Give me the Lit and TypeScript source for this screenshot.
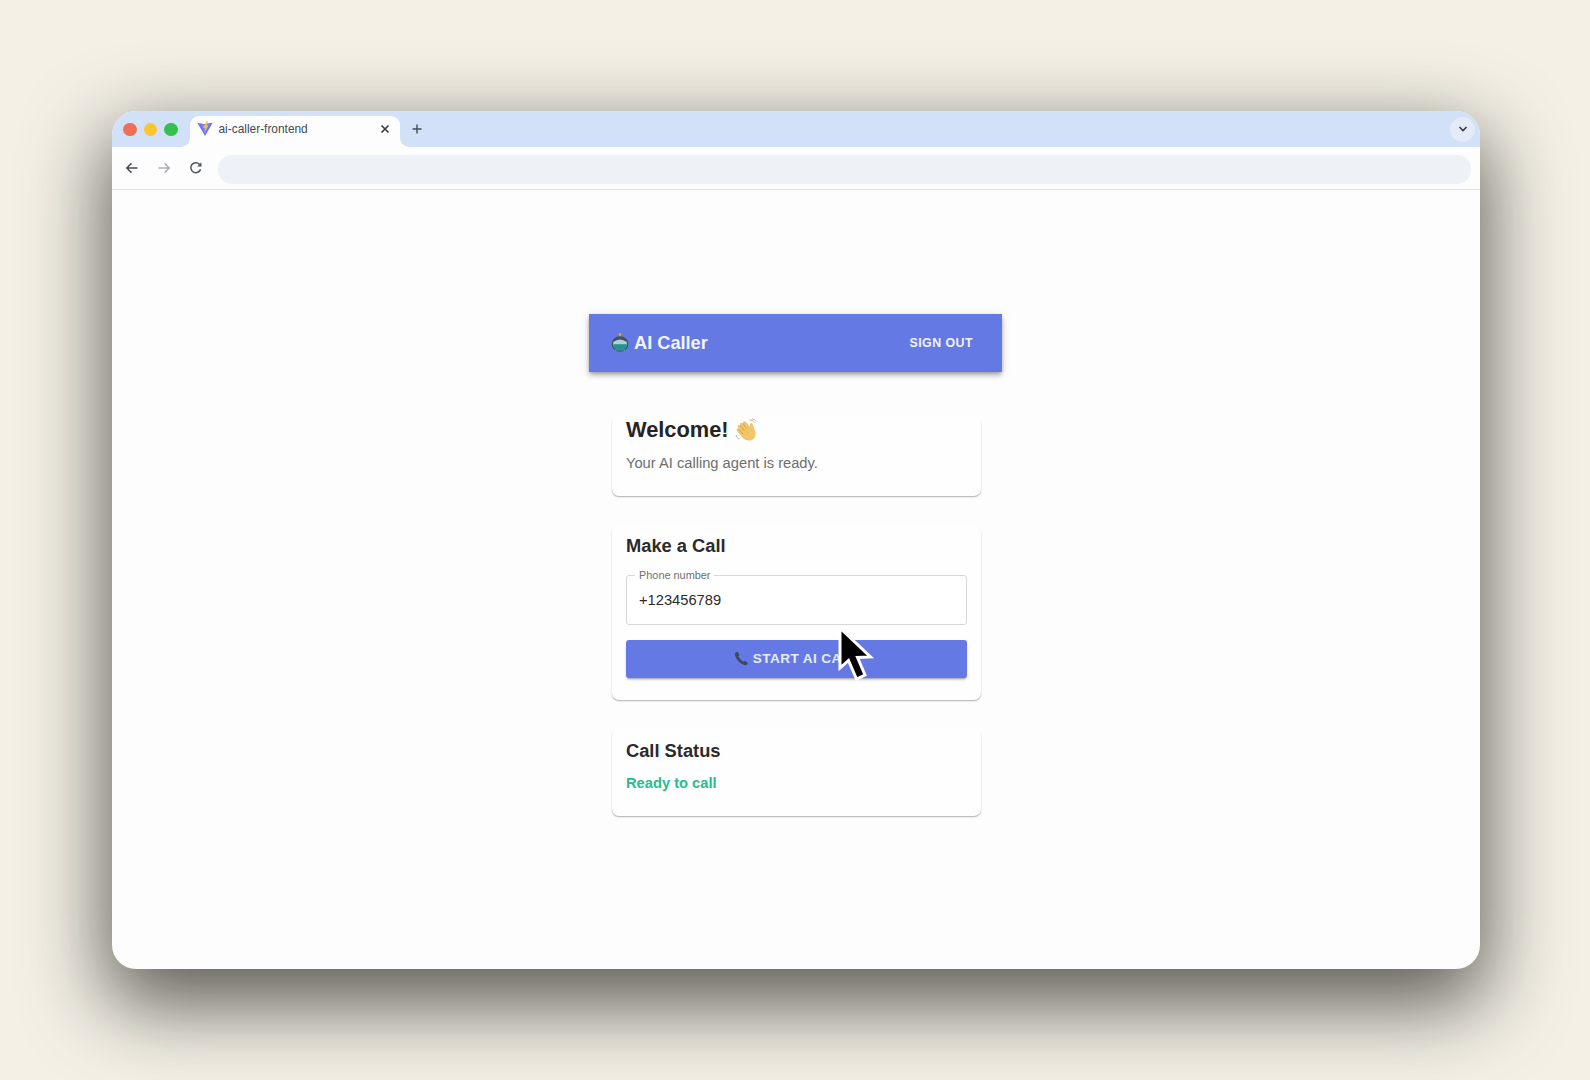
import { LitElement, html, css, svg } from "lit";
import { customElement } from "lit/decorators.js";

const viteIcon = svg`<svg width="16" height="16" viewBox="0 0 16 16"><path d="M0.3 1.8 L7 3 L15.7 1.8 L8 15 Z" fill="#6f73f2"/><path d="M4.8 3.4 L8 13.6 L11.6 3.4 Z" fill="#a08cf2" opacity=".75"/><path d="M9.5 0.2 L6.3 6.8 L8.4 6.8 L7.7 10.8 L11.4 4.6 L9.4 4.6 L11 0.2 Z" fill="#fbc531"/></svg>`;

const robot = svg`<svg width="18" height="20" viewBox="0 0 18 20"><rect x="8.2" y="0.5" width="1.6" height="4" fill="#c98a3c"/><circle cx="9" cy="1.6" r="1.3" fill="#e8a33d"/><ellipse cx="9" cy="11" rx="8.4" ry="7.8" fill="#3e5560"/><path d="M2.2 9 Q9 3.8 15.8 9 L15.8 11 H2.2 Z" fill="#b9ccd2"/><path d="M1.6 11 H16.4 L13.8 17.8 H4.2 Z" fill="#3fb9a5"/><path d="M4 11.5 V17 M6 11.5 V18 M8 11.5 V18 M10 11.5 V18 M12 11.5 V18 M14 11.5 V17" stroke="#1e4f72" stroke-width=".8"/></svg>`;

const wave = svg`<svg width="24" height="24" viewBox="0 0 24 24"><path d="M3 13 C1.6 11.6 3.2 10 4.6 11 L3.9 9.2 C3 7.4 5 6.2 6.2 7.6 L6 6.6 C5.6 4.8 7.6 4 8.8 5.4 L9 4.6 C9 3 11 2.6 12 4 L16 9 L15.9 6.6 C16 4.8 18.3 4.7 18.8 6.4 L21.4 14 C22.6 18.4 19.6 22.6 15 22.6 C11.8 22.6 9.8 21 8 19 Z" fill="#f2c56b"/><path d="M6.2 7.6 L10.6 13 M8.8 5.4 L13 10.6 M4.6 11 L9 16" stroke="#d69f45" stroke-width=".9" fill="none"/><path d="M15.5 2.2 C17.6 1.8 19.4 2.8 20.2 4.6 M18 .9 C19.8 1 21.4 2 22 3.4 M2 17 C2.4 19 3.6 20.4 5.4 21" stroke="#b9a98c" stroke-width=".9" fill="none"/></svg>`;

const phone = svg`<svg width="15" height="15" viewBox="0 0 15 15"><path d="M2.4 1 C1 1.8 .6 3.4 1.4 5.4 C2.8 9 6 12.4 9.6 13.8 C11.2 14.4 12.6 14.2 13.6 13 L14 12.2 L11 9.8 L9.6 10.8 C7.6 9.8 5.2 7.2 4.4 5.2 L5.6 4 L3.4 .8 Z" fill="#3a4b5a"/></svg>`;

const cursor = svg`<svg width="46" height="64" viewBox="0 0 46 64"><path d="M4 3 L4 43 L12.5 35.5 L20.5 54 L29 50 L21.5 32.5 L34.5 32 Z" fill="#000" stroke="#fff" stroke-width="3" stroke-linejoin="miter"/></svg>`;

@customElement("app-root")
export class AppRoot extends LitElement {
  static styles = css`
    :host {
      display: block;
      width: 1590px;
      height: 1080px;
      overflow: hidden;
      background: #f4f0e6;
      font-family: "Liberation Sans", Arial, sans-serif;
      color: #242424;
    }
    .stage {
      box-sizing: border-box;
      height: 100%;
      padding: 111px 110px 111px 112px;
    }
    .window {
      position: relative;
      height: 858px;
      border-radius: 24px;
      background: #fdfdfd;
      box-shadow: 0 30px 80px 6px rgba(20, 20, 15, 0.68);
      overflow: hidden;
      display: flex;
      flex-direction: column;
    }
    .tabstrip {
      height: 36px;
      flex: none;
      background: #d3e1f8;
      display: flex;
      align-items: flex-end;
      padding-left: 11px;
    }
    .lights {
      display: flex;
      gap: 7px;
      align-self: center;
      margin-top: 1px;
    }
    .light {
      width: 13.5px;
      height: 13.5px;
      border-radius: 50%;
    }
    .red { background: #ee6f55; }
    .yellow { background: #fbc72b; }
    .green { background: #35c04e; }
    .tab {
      position: relative;
      box-sizing: border-box;
      width: 210px;
      height: 31px;
      margin-left: 12px;
      padding: 0 10px 5px 7px;
      background: #fdfdfe;
      border-radius: 9px 9px 0 0;
      display: flex;
      align-items: center;
      font-size: 11.9px;
      color: #444a52;
    }
    .tab::before,
    .tab::after {
      content: "";
      position: absolute;
      bottom: 0;
      width: 9px;
      height: 9px;
    }
    .tab::before {
      left: -9px;
      background: radial-gradient(circle at 0 0, transparent 8.5px, #fdfdfe 9px);
    }
    .tab::after {
      right: -9px;
      background: radial-gradient(circle at 100% 0, transparent 8.5px, #fdfdfe 9px);
    }
    .tab-title {
      flex: 1;
      margin-left: 6px;
    }
    .plus {
      margin-left: 11px;
      align-self: center;
      display: flex;
    }
    .spacer { flex: 1; }
    .chevron {
      align-self: center;
      margin-right: 5px;
      width: 25px;
      height: 25px;
      border-radius: 50%;
      background: #e3eaf8;
      display: flex;
      align-items: center;
      justify-content: center;
    }
    .toolbar {
      height: 43px;
      flex: none;
      box-sizing: border-box;
      background: #fdfdfe;
      border-bottom: 1px solid #e3e3e5;
      display: flex;
      align-items: center;
      padding: 0 9px 0 13px;
    }
    .nav {
      width: 32px;
      display: flex;
    }
    .nav.reload { width: 22px; }
    .address {
      flex: 1;
      height: 29px;
      border-radius: 14px;
      background: #eef2f7;
      margin: 2px 0 0 7px;
    }
    .page {
      flex: 1;
      display: flex;
      flex-direction: column;
      align-items: center;
      padding-top: 124px;
      padding-right: 1px;
    }
    .app {
      width: 413px;
      display: flex;
      flex-direction: column;
      align-items: center;
    }
    .appbar {
      align-self: stretch;
      box-sizing: border-box;
      height: 58px;
      background: #6479e4;
      box-shadow: 0 2px 4px -1px rgba(0,0,0,.3), 0 4px 5px rgba(0,0,0,.14), 0 1px 10px rgba(0,0,0,.1);
      color: #f2f4fd;
      display: flex;
      align-items: center;
      justify-content: space-between;
      padding: 0 29px 0 22px;
    }
    .brand {
      display: flex;
      align-items: center;
      gap: 5px;
      font-size: 18.2px;
      font-weight: 700;
    }
    .signout {
      font-size: 12.4px;
      font-weight: 700;
      letter-spacing: 0.45px;
    }
    .cards {
      width: 369px;
      display: flex;
      flex-direction: column;
      gap: 29px;
      margin: 44px 0 0 2px;
    }
    .card {
      box-sizing: border-box;
      padding: 0 14px;
      background: #fefefe;
      border-radius: 7px;
      box-shadow: 0 1.5px 1.5px -0.5px rgba(0,0,0,.3), 0 0 1px rgba(0,0,0,.012);
    }
    .welcome { height: 80px; padding-top: 0; }
    .make { height: 175px; padding-top: 9px; }
    .status { height: 87px; padding-top: 10px; }
    h1 {
      margin: 0;
      display: flex;
      align-items: center;
      gap: 5px;
      font-size: 21.8px;
      line-height: 28px;
      font-weight: 700;
      color: #242424;
    }
    .sub {
      margin: 10px 0 0;
      font-size: 14.7px;
      line-height: 18px;
      color: #6e6e6e;
    }
    h2 {
      margin: 0;
      font-size: 18.3px;
      line-height: 24px;
      font-weight: 700;
      color: #2a2a2a;
    }
    .field {
      position: relative;
      box-sizing: border-box;
      height: 50px;
      margin-top: 17px;
      border: 1px solid #d8d8d8;
      border-radius: 3px;
      background: #fff;
      display: flex;
      align-items: center;
      padding: 0 12px 1px;
      font-size: 14.7px;
      color: #2b2b2b;
    }
    .label {
      position: absolute;
      left: 8px;
      top: -7px;
      padding: 0 4px;
      background: #fff;
      font-size: 10.9px;
      line-height: 12px;
      color: #6f6f6f;
    }
    .cta {
      box-sizing: border-box;
      height: 38px;
      margin-top: 15px;
      padding-bottom: 1px;
      border-radius: 3px;
      background: #6479e4;
      box-shadow: 0 2px 2px -1px rgba(0,0,0,.28), 0 2px 3px rgba(0,0,0,.12);
      color: #e8ecfb;
      display: flex;
      align-items: center;
      justify-content: center;
      gap: 4px;
      font-size: 13.6px;
      font-weight: 700;
      letter-spacing: 0.4px;
    }
    .ready {
      margin: 11px 0 0;
      font-size: 14.7px;
      line-height: 18px;
      font-weight: 700;
      color: #26bd8f;
    }
    .pointer {
      position: absolute;
      left: 724px;
      top: 514px;
      display: block;
    }
    .pointer svg { display: block; }
  `;

  render() {
    return html`
      <div class="stage">
        <div class="window">
          <div class="tabstrip">
            <div class="lights">
              <div class="light red"></div>
              <div class="light yellow"></div>
              <div class="light green"></div>
            </div>
            <div class="tab">
              ${viteIcon}
              <span class="tab-title">ai-caller-frontend</span>
              <svg width="10" height="10" viewBox="0 0 10 10"><path d="M1.5 1.5 L8.5 8.5 M8.5 1.5 L1.5 8.5" stroke="#3c4043" stroke-width="1.7"/></svg>
            </div>
            <div class="plus">
              <svg width="12" height="12" viewBox="0 0 12 12"><path d="M6 1.5 V10.5 M1.5 6 H10.5" stroke="#454a55" stroke-width="1.4"/></svg>
            </div>
            <div class="spacer"></div>
            <div class="chevron">
              <svg width="10" height="8" viewBox="0 0 10 8"><path d="M1.5 2 L5 5.5 L8.5 2" fill="none" stroke="#363b45" stroke-width="1.6"/></svg>
            </div>
          </div>
          <div class="toolbar">
            <div class="nav">
              <svg width="14" height="14" viewBox="0 0 14 14"><path d="M12.5 7 H2 M6.5 2.2 L1.8 7 L6.5 11.8" fill="none" stroke="#454a50" stroke-width="1.5"/></svg>
            </div>
            <div class="nav">
              <svg width="14" height="14" viewBox="0 0 14 14"><path d="M1.5 7 H12 M7.5 2.2 L12.2 7 L7.5 11.8" fill="none" stroke="#a9adb3" stroke-width="1.5"/></svg>
            </div>
            <div class="nav reload">
              <svg width="14" height="14" viewBox="0 0 14 14"><path d="M11.6 8.2 A5 5 0 1 1 10.6 3.4 L12 4.8" fill="none" stroke="#50545a" stroke-width="1.5"/><path d="M12.4 1.2 V5.4 H8.2 Z" fill="#50545a"/></svg>
            </div>
            <div class="address"></div>
          </div>
          <div class="page">
            <div class="app">
              <div class="appbar">
                <div class="brand">${robot}<span>AI Caller</span></div>
                <div class="signout">SIGN OUT</div>
              </div>
              <div class="cards">
                <div class="card welcome">
                  <h1><span>Welcome!</span>${wave}</h1>
                  <p class="sub">Your AI calling agent is ready.</p>
                </div>
                <div class="card make">
                  <h2>Make a Call</h2>
                  <div class="field">
                    <span class="label">Phone number</span>
                    +123456789
                  </div>
                  <div class="cta">${phone}<span>START AI CALL</span></div>
                </div>
                <div class="card status">
                  <h2>Call Status</h2>
                  <p class="ready">Ready to call</p>
                </div>
              </div>
            </div>
          </div>
          <div class="pointer">${cursor}</div>
        </div>
      </div>
    `;
  }
}
